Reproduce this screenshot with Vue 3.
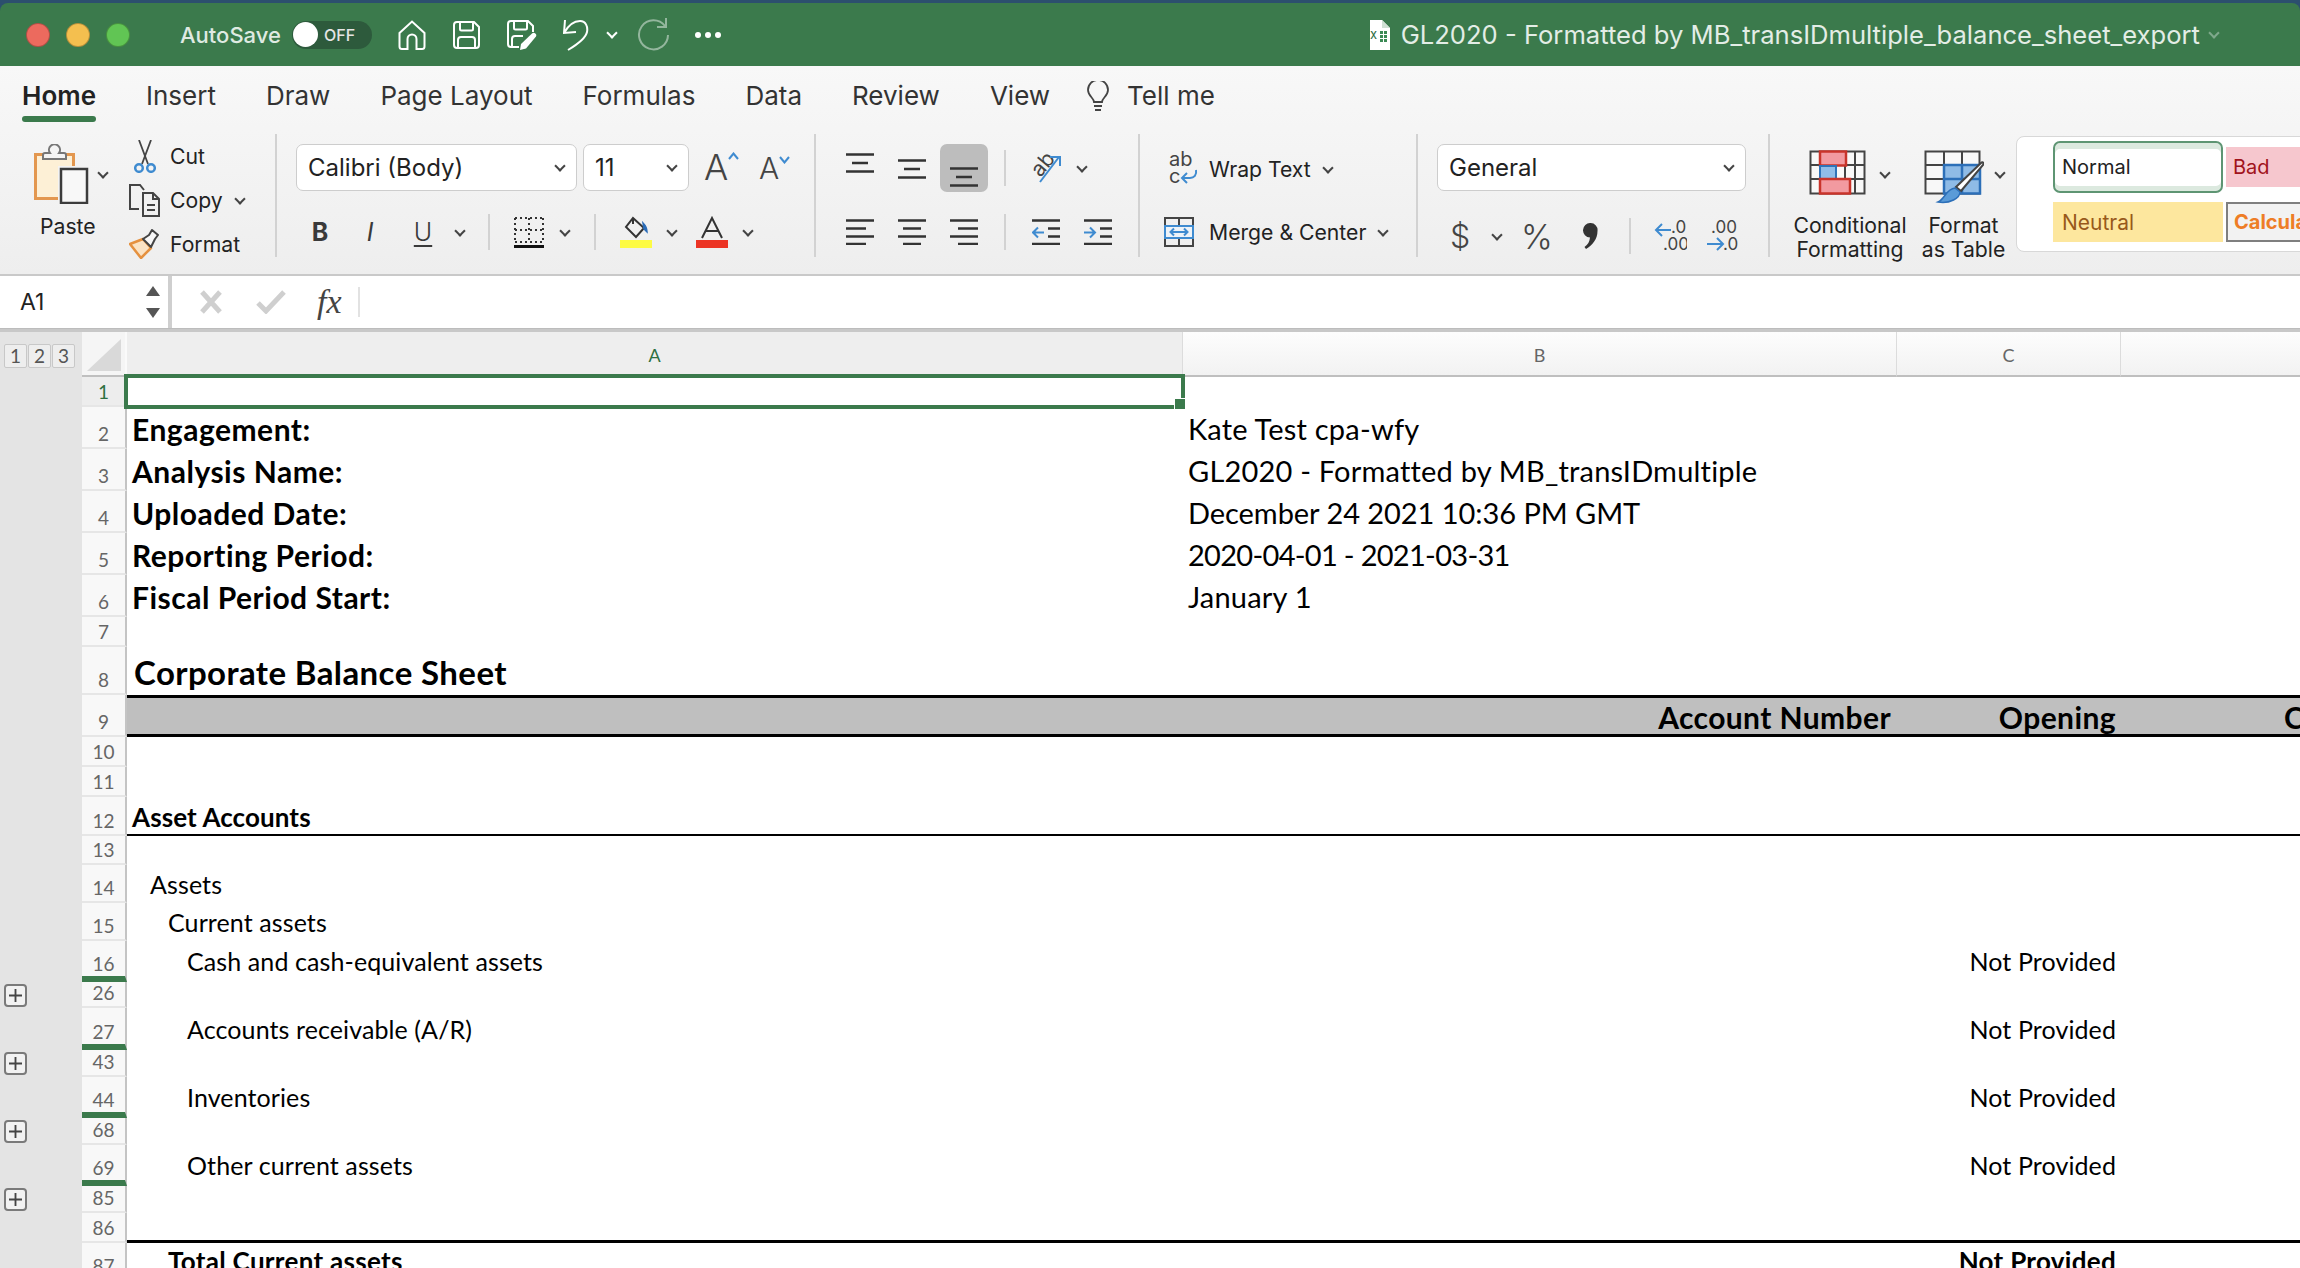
<script setup>
const rows = [
  { n: 1, h: 30, sel: true },
  { n: 2, h: 42, a: 'Engagement:', b: 'Kate Test cpa-wfy', kind: 'meta' },
  { n: 3, h: 42, a: 'Analysis Name:', b: 'GL2020 - Formatted by MB_transIDmultiple', kind: 'meta' },
  { n: 4, h: 42, a: 'Uploaded Date:', b: 'December 24 2021 10:36 PM GMT', kind: 'meta', track: '-0.05px' },
  { n: 5, h: 42, a: 'Reporting Period:', b: '2020-04-01 - 2021-03-31', kind: 'meta', track: '-0.7px' },
  { n: 6, h: 42, a: 'Fiscal Period Start:', b: 'January 1', kind: 'meta' },
  { n: 7, h: 30 },
  { n: 8, h: 48, a: 'Corporate Balance Sheet', kind: 'title' },
  { n: 9, h: 42, b: 'Account Number', c: 'Opening', d: 'Closing', kind: 'band' },
  { n: 10, h: 30 },
  { n: 11, h: 30 },
  { n: 12, h: 39, a: 'Asset Accounts', kind: 'section' },
  { n: 13, h: 29 },
  { n: 14, h: 38, a: 'Assets', lvl: 1 },
  { n: 15, h: 38, a: 'Current assets', lvl: 2 },
  { n: 16, h: 41, a: 'Cash and cash-equivalent assets', c: 'Not Provided', lvl: 3, cut: true },
  { n: 26, h: 26, plus: true },
  { n: 27, h: 42, a: 'Accounts receivable (A/R)', c: 'Not Provided', lvl: 3, cut: true },
  { n: 43, h: 27, plus: true },
  { n: 44, h: 41, a: 'Inventories', c: 'Not Provided', lvl: 3, cut: true },
  { n: 68, h: 27, plus: true },
  { n: 69, h: 41, a: 'Other current assets', c: 'Not Provided', lvl: 3, cut: true },
  { n: 85, h: 27, plus: true },
  { n: 86, h: 30, kind: 'rule' },
  { n: 87, h: 38, a: 'Total Current assets', c: 'Not Provided', lvl: 2, kind: 'total' },
]

const tabs = ['Home', 'Insert', 'Draw', 'Page Layout', 'Formulas', 'Data', 'Review', 'View']
</script>

<template>
  <div class="app">
    <header class="titlebar">
      <div class="lights"><i class="red"></i><i class="amber"></i><i class="green"></i></div>
      <span class="autosave">AutoSave</span>
      <div class="toggle"><i></i><span>OFF</span></div>
      <div class="quick">
        <svg width="28" height="30" viewBox="0 0 28 30"><path d="M1.500 13 14 1.500 26.500 13v13.500a2.500 2.500 0 0 1-2.500 2.500h-5.500V19a4.500 4.500 0 0 0-9 0v10H4a2.500 2.500 0 0 1-2.500-2.500z" /></svg>
        <svg width="27" height="28" viewBox="0 0 27 28"><path d="M4 1h17l5 5v18a3 3 0 0 1-3 3H4a3 3 0 0 1-3-3V4a3 3 0 0 1 3-3zM7 1v7a1.500 1.500 0 0 0 1.500 1.500h10A1.500 1.500 0 0 0 20 8V1M5 27v-8a3 3 0 0 1 3-3h11a3 3 0 0 1 3 3v8" /></svg>
        <svg width="30" height="30" viewBox="0 0 30 30"><path d="M12 27H4a3 3 0 0 1-3-3V4a3 3 0 0 1 3-3h17l5 5v6M7 1v7a1.500 1.500 0 0 0 1.500 1.500h10A1.500 1.500 0 0 0 20 8V1M5 27v-8a3 3 0 0 1 3-3h8" /><path class="solid" d="M25 13.500a2.500 2.500 0 0 1 3.800 3.200L19 28.500l-6 1.500 1-6z" /></svg>
        <svg class="undo" width="26" height="32" viewBox="0 0 26 32"><path d="M2 1 1 14l12-1M1 14C5 7 11 2 17 2c6 0 8 6 7 11-1 5-9 12-19 18" /></svg>
        <i class="chev white"></i>
        <svg class="redo" width="33" height="33" viewBox="0 0 33 33"><path d="M28 8A14.500 14.500 0 1 0 31 17M29 0v9h-9" /></svg>
        <div class="dots"><i></i><i></i><i></i></div>
      </div>
      <div class="doc">
        <svg width="23" height="30" viewBox="0 0 23 30">
          <path fill="#fff" d="M3 0h12l8 8v22H3z" />
          <path fill="#cfe0d3" d="M15 0v8h8z" />
          <text x="3" y="19" font-size="13" font-family="Inter" fill="#2f6e44">x</text>
          <path fill="#3c8a55" d="M13 11h3v3h-3zM17 11h3v3h-3zM13 15h3v3h-3zM17 15h3v3h-3zM13 19h3v3h-3zM17 19h3v3h-3z" />
        </svg>
        <span>GL2020 - Formatted by MB_transIDmultiple_balance_sheet_export</span>
        <i class="chev faded"></i>
      </div>
    </header>

    <section class="ribbon">
      <nav class="tabs">
        <span v-for="t in tabs" :key="t" class="tab" :class="{ active: t === 'Home' }">{{ t }}</span>
        <span class="tell">
          <svg width="22" height="30" viewBox="0 0 22 30"><path d="M7 21c0-4-6-6-6-12a10 10 0 0 1 20 0c0 6-6 8-6 12zM7 25h8M8 29h6" /></svg>
          Tell me
        </span>
      </nav>

      <div class="groups">
        <div class="group g-clip">
          <div class="paste">
            <div class="paste-top">
              <svg width="55" height="60" viewBox="0 0 55 60">
                <rect x="1.500" y="10.500" width="38" height="44" fill="#fdf0d6" stroke="#e3974f" stroke-width="3" />
                <path d="M9 15v-4a2 2 0 0 1 2-2h5a5.500 5.500 0 1 1 9 0h5a2 2 0 0 1 2 2v4z" fill="#f4f4f4" stroke="#777" stroke-width="2" />
                <rect x="24" y="22" width="31" height="38" fill="#f3f3f3" />
                <rect x="27" y="25" width="26" height="34" fill="#f8f8f8" stroke="#3c3c3c" stroke-width="2.500" />
              </svg>
              <i class="chev"></i>
            </div>
            <span>Paste</span>
          </div>
          <div class="clip-list">
            <div class="clip-item">
              <span class="clip-ic"><svg width="22" height="33" viewBox="0 0 22 33"><path d="M5 0l9 24M17 0 8 24" stroke="#444" stroke-width="1.800" fill="none" /><circle cx="5" cy="28" r="3.800" fill="none" stroke="#3f8bd0" stroke-width="2.500" /><circle cx="17" cy="28" r="3.800" fill="none" stroke="#3f8bd0" stroke-width="2.500" /></svg></span>
              <span>Cut</span>
            </div>
            <div class="clip-item">
              <span class="clip-ic"><svg width="31" height="33" viewBox="0 0 31 33"><path d="M10 25H1V1h10l4 5M14 9h10l6 6v17H14zM24 9v6h6M18 21h8M18 26h8" fill="none" stroke="#444" stroke-width="2" /></svg></span>
              <span>Copy</span><i class="chev mini"></i>
            </div>
            <div class="clip-item">
              <span class="clip-ic"><svg width="31" height="30" viewBox="0 0 31 30"><path d="M1 15l13-5 8 9-10 10z" fill="#fbe3c4" stroke="#e5913f" stroke-width="2.500" stroke-linejoin="round" /><path d="M14 10l6-4 3-5 6 5-3 4-4 8z" fill="#f8f8f8" stroke="#444" stroke-width="2" stroke-linejoin="round" /></svg></span>
              <span>Format</span>
            </div>
          </div>
        </div>

        <div class="group g-font">
          <div class="font-top">
            <div class="select font-name"><span>Calibri (Body)</span><i class="chev"></i></div>
            <div class="select font-size"><span>11</span><i class="chev"></i></div>
            <div class="resize big">A<svg width="11" height="8" viewBox="0 0 11 8"><path d="M1 7l4.500-5.500L10 7" fill="none" stroke="#3f8bd0" stroke-width="2" /></svg></div>
            <div class="resize small">A<svg width="11" height="8" viewBox="0 0 11 8"><path d="M1 1l4.500 5.500L10 1" fill="none" stroke="#3f8bd0" stroke-width="2" /></svg></div>
          </div>
          <div class="font-bottom">
            <b class="fb">B</b>
            <i class="fi">I</i>
            <u class="fu">U</u>
            <i class="chev"></i>
            <span class="vsep"></span>
            <svg width="30" height="32" viewBox="0 0 30 32"><path d="M1 2h28M1 14h28M1 26h28M1 2v24M15 2v24M29 2v24" fill="none" stroke="#333" stroke-width="2" stroke-dasharray="2 3" /><rect y="29" width="30" height="3" fill="#111" /></svg>
            <i class="chev"></i>
            <span class="vsep"></span>
            <svg width="32" height="32" viewBox="0 0 32 32"><path d="M13 2l11 10-8 9-10-10z" fill="none" stroke="#333" stroke-width="2" /><path d="M13 2v6" stroke="#333" stroke-width="2" /><path d="M23 7c2 2 4 5 4 9l-3-3z" fill="#2b6cb8" stroke="#2b6cb8" stroke-width="1.500" /><rect y="24" width="32" height="8" fill="#fdfb44" /></svg>
            <i class="chev"></i>
            <svg width="32" height="32" viewBox="0 0 32 32"><path d="M6 22 16 2l10 20M10 15h12" fill="none" stroke="#333" stroke-width="2" /><rect y="24" width="32" height="8" fill="#ec3424" /></svg>
            <i class="chev"></i>
          </div>
        </div>

        <div class="group g-align">
          <div class="align-top">
            <svg class="lines" width="28" height="20" viewBox="0 0 28 20"><path d="M0 1.500h28M6 10h16M0 18.500h28" /></svg>
            <svg class="lines low1" width="28" height="20" viewBox="0 0 28 20"><path d="M0 1.500h28M6 10h16M0 18.500h28" /></svg>
            <span class="active-btn"><svg class="lines" width="28" height="20" viewBox="0 0 28 20"><path d="M0 1.500h28M6 10h16M0 18.500h28" /></svg></span>
            <span class="vsep"></span>
            <svg width="45" height="42" viewBox="-6 -6 45 42">
              <text x="1" y="19" font-size="21" font-family="Inter" fill="#444" transform="rotate(-50 12 12)">ab</text>
              <path d="M10 29 29 4M20 4h10v9" fill="none" stroke="#3f8bd0" stroke-width="2" />
            </svg>
            <i class="chev"></i>
          </div>
          <div class="align-bottom">
            <svg class="lines" width="28" height="26" viewBox="0 0 28 26"><path d="M0 1.500h28M0 9.500h20M0 17.500h28M0 25h20" /></svg>
            <svg class="lines" width="28" height="26" viewBox="0 0 28 26"><path d="M0 1.500h28M5 9.500h18M0 17.500h28M5 25h18" /></svg>
            <svg class="lines" width="28" height="26" viewBox="0 0 28 26"><path d="M0 1.500h28M8 9.500h20M0 17.500h28M8 25h20" /></svg>
            <span class="vsep"></span>
            <svg class="lines" width="28" height="26" viewBox="0 0 28 26"><path d="M0 1.500h28M16 9.500h12M16 17.500h12M0 25h28" /><path class="blue" d="M12 13.500H1M6 8.500l-5 5 5 5" /></svg>
            <svg class="lines" width="28" height="26" viewBox="0 0 28 26"><path d="M0 1.500h28M16 9.500h12M16 17.500h12M0 25h28" /><path class="blue" d="M0 13.500h11M6 8.500l5 5-5 5" /></svg>
          </div>
        </div>

        <div class="group g-wrap">
          <div class="wrap-row">
            <span class="wrap-ic"><svg class="wrap-svg" width="30" height="44" viewBox="0 -6 30 44">
              <text x="0" y="13" font-size="20" font-family="Inter" fill="#444">ab</text>
              <text x="0" y="30" font-size="20" font-family="Inter" fill="#444">c</text>
              <path d="M27 17c1 5-2 8-6 8h-8M18 20l-5 5 5 5" fill="none" stroke="#3f8bd0" stroke-width="2" />
            </svg></span>
            <span>Wrap Text</span><i class="chev mini"></i>
          </div>
          <div class="wrap-row">
            <span class="wrap-ic"><svg width="30" height="30" viewBox="0 0 30 30">
              <path d="M1 1h28v28H1zM15 1v8M15 21v8" fill="none" stroke="#444" stroke-width="2" />
              <rect x="1" y="9" width="28" height="12" fill="#eef3f8" stroke="#3f8bd0" stroke-width="2" />
              <path d="M7 15h16M10 11.500 6.500 15l3.500 3.500M20 11.500l3.500 3.500-3.500 3.500" fill="none" stroke="#3f8bd0" stroke-width="2" />
            </svg></span>
            <span>Merge &amp; Center</span><i class="chev mini"></i>
          </div>
        </div>

        <div class="group g-num">
          <div class="select general"><span>General</span><i class="chev"></i></div>
          <div class="num-bottom">
            <span class="dollar">$</span>
            <i class="chev"></i>
            <span class="percent">%</span>
            <svg width="15" height="26" viewBox="0 0 15 26"><path d="M7.500 0A7 7 0 0 1 14.500 8c0 8-5 14-11.500 18l-1.500-2c3.500-2.500 5-5 5.500-9.500A7 7 0 0 1 7.500 0z" fill="#333" /></svg>
            <span class="vsep"></span>
            <svg width="33" height="44" viewBox="0 -6 33 44">
              <text x="17" y="13" font-size="17" font-family="Inter" fill="#444">.0</text>
              <text x="9" y="30" font-size="17" font-family="Inter" fill="#444">.00</text>
              <path d="M17 10H2M8 4l-6 6 6 6" fill="none" stroke="#3f8bd0" stroke-width="2" />
            </svg>
            <svg width="33" height="44" viewBox="0 -6 33 44">
              <text x="5" y="13" font-size="17" font-family="Inter" fill="#444">.00</text>
              <text x="17" y="30" font-size="17" font-family="Inter" fill="#444">.0</text>
              <path d="M1 24h16M11 18l6 6-6 6" fill="none" stroke="#3f8bd0" stroke-width="2" />
            </svg>
          </div>
        </div>

        <div class="group g-fmt">
          <div class="fmt-btn cond">
            <div class="fmt-top">
              <svg width="57" height="45" viewBox="0 0 57 45">
                <path d="M1.500 1.500h54v42h-54zM1.500 15h54M1.500 29h54M36 1.500v42M46 1.500v42" fill="#f8f8f8" stroke="#444" stroke-width="2" />
                <rect x="11" y="1.500" width="26" height="14" fill="#f29aa0" stroke="#c9342b" stroke-width="2.500" />
                <rect x="11" y="16" width="16" height="13" fill="#90bde8" stroke="#2f73b8" stroke-width="2" />
                <rect x="11" y="29" width="30" height="14.500" fill="#f29aa0" stroke="#c9342b" stroke-width="2.500" />
              </svg>
              <i class="chev"></i>
            </div>
            <div class="fmt-label">Conditional<br />Formatting</div>
          </div>
          <div class="fmt-btn table">
            <div class="fmt-top">
              <svg width="60" height="54" viewBox="0 0 60 54">
                <path d="M1.500 1.500h54v42h-54zM1.500 15h54M1.500 29h54M20 1.500v42M38 1.500v42" fill="#f8f8f8" stroke="#444" stroke-width="2" />
                <path d="M20 15h36v28.500H20zM20 29h36M38 15v28.500" fill="#8fbbe6" stroke="#2c6fb8" stroke-width="2.500" />
                <path d="M57 13c2-2 3 0 2 2L37 41l-5-4z" fill="#fff" stroke="#444" stroke-width="2" />
                <path d="M31 38l5 4c0 6-10 12-22 10 7-3 8-13 17-14z" fill="#5a9bd8" stroke="#2c6fb8" stroke-width="1.500" />
              </svg>
              <i class="chev"></i>
            </div>
            <div class="fmt-label">Format<br />as Table</div>
          </div>
        </div>

        <div class="styles">
          <div class="st normal"><span>Normal</span></div>
          <div class="st bad">Bad</div>
          <div class="st neutral">Neutral</div>
          <div class="st calc">Calculation</div>
        </div>
      </div>
    </section>

    <div class="formula">
      <div class="namebox">
        <span>A1</span>
        <div class="spin"><i class="up"></i><i class="down"></i></div>
      </div>
      <div class="fx-tools">
        <svg width="24" height="24" viewBox="0 0 24 24"><path d="M3 2l18 20M21 2 3 22" fill="none" stroke="#cfcfcf" stroke-width="5" /></svg>
        <svg width="30" height="24" viewBox="0 0 30 24"><path d="M2 13l8 8L28 2" fill="none" stroke="#cfcfcf" stroke-width="5" /></svg>
        <span class="fx">fx</span>
        <span class="fx-sep"></span>
      </div>
    </div>

    <div class="sheet">
      <div class="col-head">
        <div class="gutter outline">
          <span>1</span><span>2</span><span>3</span>
        </div>
        <div class="corner"><svg width="34" height="32" viewBox="0 0 34 32"><path d="M0 32 34 0v32z" fill="#d9d9d9" /></svg></div>
        <div class="col a">A</div>
        <div class="col b">B</div>
        <div class="col c">C</div>
        <div class="col d"></div>
      </div>

      <div v-for="r in rows" :key="r.n" class="row" :style="{ height: r.h + 'px' }">
        <div class="gutter">
          <span v-if="r.plus" class="plus"><svg width="14" height="14" viewBox="0 0 14 14"><path d="M7 0v14M0 7h14" stroke="#444" stroke-width="2" /></svg></span>
        </div>
        <div class="rowno" :class="{ sel: r.sel, cut: r.cut }"><span>{{ r.n }}</span></div>
        <div class="cells" :class="[r.kind, { cut: r.cut }]">
          <div class="cell a" :class="r.lvl ? 'lvl' + r.lvl : ''">
            {{ r.a }}
            <div v-if="r.sel" class="selection"><i></i></div>
          </div>
          <div class="cell b" :style="{ letterSpacing: r.track }">{{ r.b }}</div>
          <div class="cell c">{{ r.c }}</div>
          <div class="cell d">{{ r.d }}</div>
        </div>
      </div>
    </div>
  </div>
</template>

<style scoped>
.app {
  width: 2300px;
  height: 1268px;
  overflow: hidden;
  background: #2c4f6e;
  padding-top: 3px;
  box-sizing: border-box;
  font-family: Inter, "Liberation Sans", sans-serif;
  color: #222;
}

/* title bar */
.titlebar {
  height: 63px;
  display: flex;
  align-items: center;
  background: #3b7a4c;
  border-radius: 8px 8px 0 0;
  padding-left: 26px;
  color: #fff;
}
.lights {
  display: flex;
  gap: 16px;
}
.lights i {
  width: 24px;
  height: 24px;
  border-radius: 50%;
  border: 1px solid rgba(0, 0, 0, 0.25);
  box-sizing: border-box;
}
.red { background: #ec6a5e; }
.amber { background: #f4bf4f; }
.green { background: #61c554; }
.autosave {
  margin-left: 50px;
  font-size: 22px;
  font-weight: 500;
  color: #dfeae2;
  width: 112px;
}
.toggle {
  width: 80px;
  height: 28px;
  border-radius: 14px;
  background: #2d5a3c;
  display: flex;
  align-items: center;
}
.toggle i {
  width: 25px;
  height: 25px;
  margin-left: 1px;
  border-radius: 50%;
  background: #fff;
}
.toggle span {
  margin-left: 6px;
  font-size: 16px;
  font-weight: 500;
  color: #e5e5e5;
}
.quick {
  display: flex;
  align-items: center;
  margin-left: 26px;
  width: 330px;
}
.quick svg path {
  fill: none;
  stroke: #fff;
  stroke-width: 2;
}
.quick svg path.solid {
  fill: #fff;
  stroke: none;
}
.quick svg:nth-child(2) { margin-left: 27px; }
.quick svg:nth-child(3) { margin-left: 27px; }
.quick .undo { margin-left: 26px; }
.quick .chev.white { margin-left: 19px; margin-top: -4px; }
.quick .redo { margin-left: 21px; opacity: 0.45; }
.dots {
  display: flex;
  gap: 4px;
  margin-left: 25px;
}
.dots i {
  width: 6px;
  height: 6px;
  border-radius: 50%;
  background: #fff;
}
.doc {
  margin-left: auto;
  display: flex;
  align-items: center;
  gap: 11px;
  padding-right: 82px;
  font-size: 25.600px;
  color: #e3ede6;
}

/* chevrons */
.chev {
  display: block;
  width: 8px;
  height: 8px;
  box-sizing: border-box;
  border: solid #444;
  border-width: 0 2.500px 2.500px 0;
  transform: rotate(45deg);
  margin-top: -3px;
}
.chev.white { border-color: #fff; }
.chev.faded { border-color: #7fa98c; margin-left: -1px; }

/* ribbon */
.ribbon {
  height: 210px;
  background: linear-gradient(#f8f8f8, #eeeeee);
  border-bottom: 2px solid #c9c9c9;
  box-sizing: border-box;
}
.tabs {
  height: 59px;
  display: flex;
  align-items: center;
  gap: 50px;
  padding-left: 22px;
  font-size: 26px;
  color: #333;
}
.tab {
  position: relative;
}
.tab.active {
  font-weight: 600;
  color: #222;
}
.tab.active::after {
  content: "";
  position: absolute;
  left: 0;
  right: 0;
  top: 36px;
  height: 6px;
  border-radius: 3px;
  background: #3b7a4c;
}
.tell {
  display: flex;
  align-items: center;
  gap: 18px;
  margin-left: -13px;
}
.tell svg path {
  fill: none;
  stroke: #444;
  stroke-width: 1.800;
}
.groups {
  display: flex;
  margin-top: 9px;
  height: 123px;
}
.group {
  border-right: 2px solid #d2d2d2;
  box-sizing: border-box;
  padding-top: 10px;
  font-size: 21.200px;
  flex: none;
}

.g-clip {
  width: 277px;
  display: flex;
  padding-top: 0;
  padding-left: 34px;
}
.paste {
  width: 91px;
}
.paste-top {
  display: flex;
  align-items: center;
  padding-top: 10px;
  gap: 10px;
}
.paste > span {
  display: block;
  margin: 9px 0 0 6px;
}
.clip-list {
  padding-top: 0;
}
.clip-item {
  display: flex;
  align-items: center;
  height: 44px;
}
.clip-ic {
  width: 45px;
  display: flex;
  justify-content: center;
  padding-right: 6px;
  box-sizing: border-box;
}
.chev.mini {
  margin-left: 13px;
}

.g-font {
  width: 539px;
  padding-left: 19px;
}
.select {
  height: 47px;
  box-sizing: border-box;
  background: #fff;
  border: 1.500px solid #cdcdcd;
  border-radius: 7px;
  display: flex;
  align-items: center;
  justify-content: space-between;
  padding: 0 12px 0 11px;
  font-size: 24px;
}
.font-top {
  display: flex;
  align-items: center;
}
.font-name { width: 281px; }
.font-size { width: 106px; margin-left: 6px; }
.resize {
  display: flex;
  align-items: flex-start;
  font-weight: 300;
  color: #444;
  line-height: 1.2;
}
.resize svg { margin-top: 6px; }
.resize.big { font-size: 36px; margin-left: 15px; width: 55px; }
.resize.small { font-size: 30px; }
.font-bottom {
  display: grid;
  grid-template-columns: 48px 52px 54px 20px 38px 42px 30px 30px 52px 20px 60px 12px;
  justify-items: center;
  align-items: center;
  height: 36px;
  margin-top: 23px;
  color: #3a3a3a;
}
.fb { font-size: 25px; }
.fi { font-size: 25px; font-weight: 400; }
.fu { font-size: 25px; font-weight: 300; text-underline-offset: 4px; }
.vsep {
  display: block;
  width: 2px;
  height: 36px;
  background: #d2d2d2;
}

.g-align {
  width: 324px;
  padding-left: 18px;
}
.align-top,
.align-bottom {
  display: grid;
  justify-items: center;
  align-items: center;
}
.align-top {
  grid-template-columns: 52px 52px 52px 30px 52px 20px;
  height: 48px;
}
.align-bottom {
  grid-template-columns: 52px 52px 52px 30px 52px 52px;
  height: 36px;
  margin-top: 22px;
}
.lines path {
  fill: none;
  stroke: #333;
  stroke-width: 2.500;
}
.lines path.blue {
  stroke: #3f8bd0;
  stroke-width: 2;
}
.align-top > .lines:first-child { margin-top: -10px; }
.active-btn {
  width: 48px;
  height: 48px;
  border-radius: 7px;
  background: #bdbdbd;
  display: flex;
  justify-content: center;
  padding-top: 23px;
  box-sizing: border-box;
}
.low1 { margin-top: 2px; }

.g-wrap {
  width: 278px;
  padding-left: 24px;
  padding-top: 15px;
}
.wrap-row {
  display: flex;
  align-items: center;
  height: 40px;
}
.wrap-row + .wrap-row { margin-top: 23px; }
.wrap-ic {
  width: 45px;
  display: flex;
  padding-right: 5px;
  box-sizing: border-box;
}
.wrap-svg { margin-left: 5px; }

.g-num {
  width: 352px;
  padding-left: 19px;
}
.general { width: 309px; }
.num-bottom {
  display: grid;
  grid-template-columns: 40px 34px 46px 60px 20px 60px 44px;
  justify-items: center;
  align-items: center;
  height: 36px;
  margin-top: 23px;
  padding-left: 3px;
  color: #444;
}
.dollar { font-size: 32px; font-weight: 300; }
.percent { font-size: 34px; font-weight: 300; }

.g-fmt {
  width: 246px;
  border-right: none;
  display: flex;
  padding-left: 20px;
  padding-top: 16px;
}
.fmt-btn.cond { width: 120px; }
.fmt-btn.table { width: 91px; margin-left: 8px; }
.fmt-top {
  display: flex;
  align-items: flex-start;
  height: 63px;
}
.fmt-top .chev { margin-top: 19px; }
.cond svg { margin-left: 19px; }
.cond .chev { margin-left: 15px; }
.table svg { margin-left: 6px; }
.table .chev { margin-left: 12px; }
.fmt-label {
  text-align: center;
  line-height: 24px;
  white-space: nowrap;
}

.styles {
  flex: none;
  width: 600px;
  height: 116px;
  margin-top: 2px;
  box-sizing: border-box;
  background: #fff;
  border: 1.500px solid #d8d8d8;
  border-radius: 8px;
  padding: 4px 0 0 36px;
  display: grid;
  grid-template-columns: 170px 1fr;
  grid-template-rows: 52px 40px;
  column-gap: 3px;
  row-gap: 9px;
  font-size: 20px;
}
.st {
  display: flex;
  align-items: center;
  padding-left: 7px;
  box-sizing: border-box;
}
.normal {
  border: 2px solid #5e9573;
  border-radius: 7px;
  background: #fff;
  box-shadow: inset 0 6px 0 #dce9df, inset 0 -5px 0 #dce9df;
}
.bad {
  height: 40px;
  align-self: center;
  background: #f6c7ce;
  color: #a1141c;
}
.neutral {
  background: #fde79e;
  color: #98591b;
  padding-left: 9px;
  font-size: 21px;
}
.calc {
  background: #f2f2f2;
  border: 2px solid #7f7f7f;
  color: #ee7d26;
  font-weight: 700;
  padding-left: 6px;
}

/* formula bar */
.formula {
  height: 52px;
  display: flex;
  background: #fff;
}
.namebox {
  width: 172px;
  box-sizing: border-box;
  border-right: 4px solid #cfcfcf;
  display: flex;
  align-items: center;
  justify-content: space-between;
  padding: 0 8px 0 20px;
  font-size: 23px;
}
.spin i {
  display: block;
  width: 0;
  height: 0;
  border-left: 7px solid transparent;
  border-right: 7px solid transparent;
}
.spin .up { border-bottom: 10px solid #555; }
.spin .down { border-top: 10px solid #555; margin-top: 12px; }
.fx-tools {
  display: flex;
  align-items: center;
  padding-left: 27px;
}
.fx-tools svg + svg { margin-left: 33px; }
.fx {
  font-family: "Liberation Serif", serif;
  font-style: italic;
  font-size: 34px;
  color: #444;
  margin-left: 31px;
  line-height: 1.2;
}
.fx-sep {
  width: 2px;
  height: 30px;
  background: #e2e2e2;
  margin-left: 16px;
}

/* sheet */
.sheet {
  background: #fff;
  border-top: 1px solid #bcbcbc;
}
.col-head {
  display: flex;
  height: 48px;
  border-top: 3px solid #c8c8c8;
  box-sizing: border-box;
}
.row {
  display: flex;
  box-sizing: border-box;
}
.gutter {
  width: 82px;
  flex: none;
  background: #e4e4e4;
  box-sizing: border-box;
  display: flex;
  align-items: center;
  padding-left: 4px;
}
.gutter.outline {
  gap: 1px;
  align-items: flex-start;
  padding-top: 12px;
}
.gutter.outline span {
  width: 23px;
  height: 24px;
  box-sizing: border-box;
  background: #eeeeee;
  border: 1px solid #c8c8c8;
  border-radius: 2px;
  font-family: Lato, sans-serif;
  font-size: 19px;
  line-height: 22px;
  text-align: center;
  color: #555;
}
.plus {
  width: 23px;
  height: 23px;
  box-sizing: border-box;
  border: 2px solid #7a7a7a;
  border-radius: 4px;
  background: #f2f2f2;
  display: flex;
  align-items: center;
  justify-content: center;
}
.plus svg { width: 13px; height: 13px; }
.corner {
  width: 45px;
  flex: none;
  box-sizing: border-box;
  background: #f5f5f5;
  border-right: 2px solid #fafafa;
  border-bottom: 2px solid #bfbfbf;
  display: flex;
  align-items: flex-end;
  justify-content: flex-end;
  padding: 0 4px 4px 0;
}
.col {
  flex: none;
  box-sizing: border-box;
  text-align: center;
  font-family: Lato, sans-serif;
  font-size: 18px;
  line-height: 46px;
  color: #666;
  background: linear-gradient(#fdfdfd, #f2f2f2);
  border-right: 1px solid #dcdcdc;
  border-bottom: 2px solid #bfbfbf;
}
.col.a {
  width: 1056px;
  background: #eeeeee;
  color: #2e7041;
}
.col.b { width: 714px; }
.col.c { width: 224px; }
.col.d { flex: 1; border-right: none; }
.rowno {
  width: 45px;
  flex: none;
  box-sizing: border-box;
  background: #f8f8f8;
  border-right: 2px solid #c4c4c4;
  border-bottom: 2px solid #e6e6e6;
  display: flex;
  align-items: flex-end;
  justify-content: center;
  font-family: Lato, sans-serif;
  font-size: 19px;
  line-height: 24px;
  color: #666;
  padding-bottom: 1px;
}
.rowno.sel {
  background: #ededed;
  color: #2e7041;
}
.rowno.cut {
  border-bottom: 6px solid #3b7a4c;
  padding-bottom: 0;
}
.cells {
  display: flex;
  flex: 1;
  min-width: 0;
  box-sizing: border-box;
  font-family: Lato, "Liberation Sans", sans-serif;
  font-size: 25px;
  line-height: 30px;
  color: #000;
  letter-spacing: 0.1px;
}
.cell {
  flex: none;
  box-sizing: border-box;
  display: flex;
  align-items: flex-end;
  white-space: pre;
  padding-bottom: 4px;
}
.cell.a {
  position: relative;
  width: 1056px;
  padding-left: 5px;
}
.cell.lvl1 { padding-left: 23px; }
.cell.lvl2 { padding-left: 41px; }
.cell.lvl3 { padding-left: 60px; }
.cell.b {
  width: 714px;
  padding-left: 5px;
}
.cell.c {
  width: 224px;
  justify-content: flex-end;
  padding-right: 5px;
}
.cell.d {
  flex: 1;
  min-width: 0;
  overflow: hidden;
  padding-left: 163px;
}
.cut .cell { padding-bottom: 6px; }
.selection {
  position: absolute;
  left: -3px;
  top: -3px;
  right: -2px;
  bottom: -2px;
  border: 4px solid #3b7a4c;
  pointer-events: none;
}
.selection i {
  position: absolute;
  right: -5px;
  bottom: -5px;
  width: 10px;
  height: 10px;
  background: #3b7a4c;
  border: 1px solid #fff;
}
.meta {
  font-size: 29px;
  letter-spacing: 0.2px;
  padding-bottom: 1px;
}
.meta .cell.a {
  font-weight: 700;
  font-size: 30px;
  letter-spacing: 0.5px;
}
.title {
  font-size: 33px;
  font-weight: 700;
  letter-spacing: 0.4px;
  padding-bottom: 4px;
}
.title .cell.a { padding-left: 7px; }
.band {
  background: #bfbfbf;
  border-top: 3px solid #000;
  border-bottom: 3px solid #000;
  font-size: 30px;
  font-weight: 700;
  letter-spacing: 0.4px;
}
.band .cell { padding-bottom: 2px; }
.band .cell.b {
  justify-content: flex-end;
  padding-right: 6px;
}
.section {
  border-bottom: 2px solid #000;
  font-size: 26px;
  font-weight: 700;
}
.section .cell { padding-bottom: 2px; }
.rule {
  border-bottom: 3px solid #000;
}
.total {
  font-size: 26px;
  font-weight: 700;
  letter-spacing: 0.3px;
}
.total .cell { padding-bottom: 5px; }
</style>

<style>
html,
body {
  margin: 0;
  background: #fff;
}
</style>
